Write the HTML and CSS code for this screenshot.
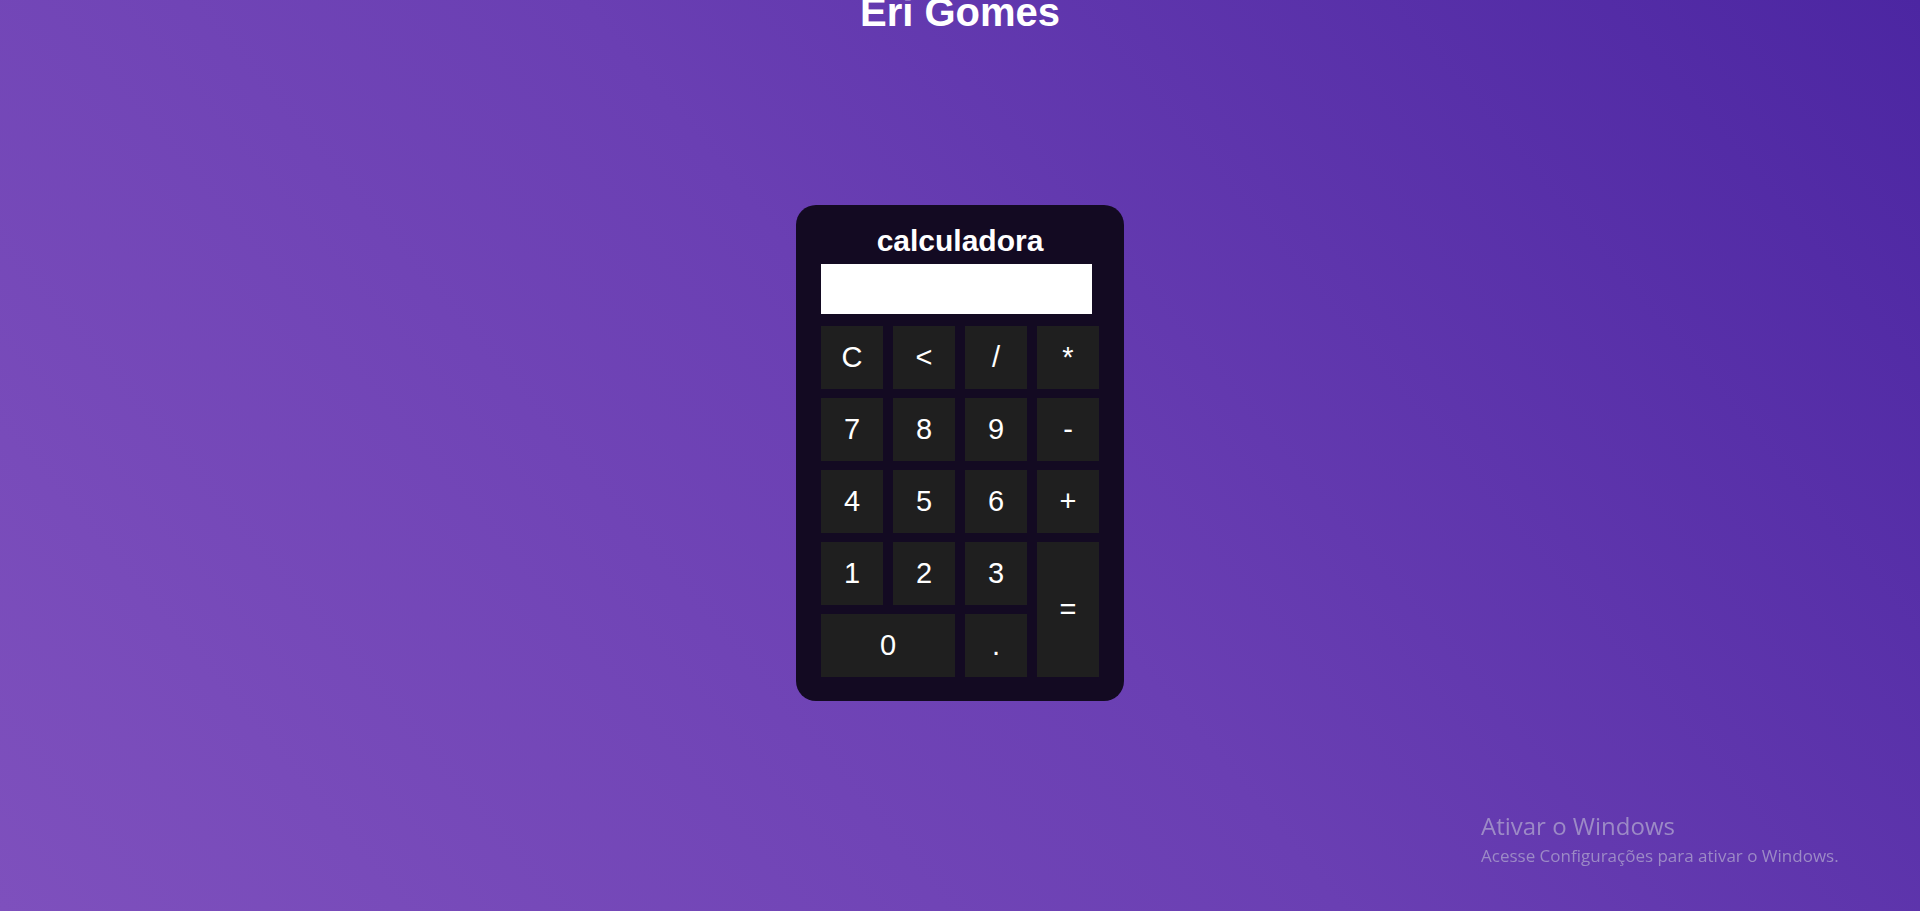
FILE: index.html
```html
<!DOCTYPE html>
<html lang="pt-BR">
<head>
<meta charset="utf-8">
<title>Calculadora</title>
<link rel="stylesheet" href="styles.css">
</head>
<body>
<h1 class="page-title">Eri Gomes</h1>
<main class="stage">
  <section class="calc">
    <h2 class="calc-title">calculadora</h2>
    <div class="display"></div>
    <div class="keys">
      <button class="key">C</button>
      <button class="key">&lt;</button>
      <button class="key">/</button>
      <button class="key">*</button>
      <button class="key">7</button>
      <button class="key">8</button>
      <button class="key">9</button>
      <button class="key">-</button>
      <button class="key">4</button>
      <button class="key">5</button>
      <button class="key">6</button>
      <button class="key">+</button>
      <button class="key">1</button>
      <button class="key">2</button>
      <button class="key">3</button>
      <button class="key key-eq">=</button>
      <button class="key key-zero">0</button>
      <button class="key">.</button>
    </div>
  </section>
</main>
<div class="activation">
  <div class="act-title">Ativar o Windows</div>
  <div class="act-sub">Acesse Configurações para ativar o Windows.</div>
</div>
</body>
</html>
```

FILE: styles.css
```css
html, body {
  margin: 0;
  padding: 0;
  height: 100%;
  overflow: hidden;
}
body {
  font-family: "Liberation Sans", Arial, sans-serif;
  background: linear-gradient(50deg, #7e50bd 0%, #6a3fb3 50%, #4c26a2 100%);
  color: #fff;
  display: flex;
  flex-direction: column;
  align-items: center;
}
.page-title {
  margin: -11px 0 0;
  font-size: 40px;
  line-height: 46px;
  font-weight: bold;
}
.stage {
  margin-top: 170px;
  display: flex;
  justify-content: center;
}
.calc {
  width: 328px;
  box-sizing: border-box;
  padding: 19px 25px 24px;
  background: #130a22;
  border-radius: 20px;
  display: flex;
  flex-direction: column;
}
.calc-title {
  margin: 0 0 6px;
  font-size: 30px;
  line-height: 34px;
  font-weight: bold;
  text-align: center;
}
.display {
  width: 271px;
  height: 50px;
  background: #fff;
  margin-bottom: 12px;
}
.keys {
  display: grid;
  grid-template-columns: repeat(4, 62px);
  grid-auto-rows: 63px;
  gap: 9px 10px;
}
.key {
  border: none;
  margin: 0;
  padding: 0;
  background: #1f1f1f;
  color: #fff;
  font-family: "Liberation Sans", Arial, sans-serif;
  font-size: 29px;
}
.key-eq {
  grid-row: span 2;
}
.key-zero {
  grid-column: span 2;
}
.activation {
  position: fixed;
  left: 1481px;
  top: 811px;
  color: #9c8ac6;
  font-family: "Open Sans", "Noto Sans", sans-serif;
}
.act-title {
  font-size: 24px;
  line-height: 30px;
}
.act-sub {
  margin-top: 3px;
  font-size: 17px;
  line-height: 24px;
}
```
